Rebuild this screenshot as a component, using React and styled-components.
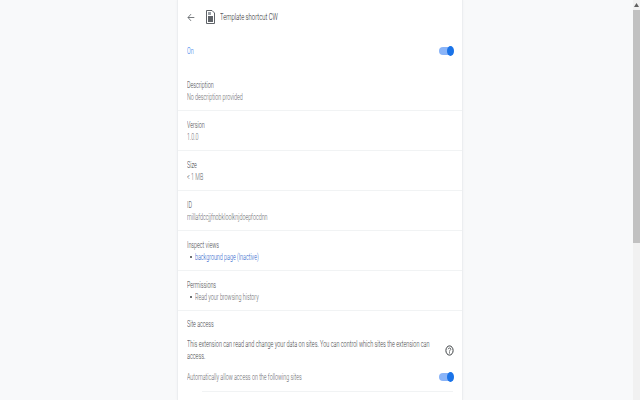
import React from "react";
import styled, { createGlobalStyle } from "styled-components";

const Global = createGlobalStyle`
  html, body { margin: 0; padding: 0; height: 400px; overflow: hidden; background: #f8f9fa; }
  #root { height: 400px; }
`;
const Page = styled.div`
  height: 400px; display: flex; font-family: Roboto, "Liberation Sans", sans-serif; background: #f8f9fa;
`;
const Main = styled.main`flex: 1; display: flex; justify-content: center; padding-left: 7px;`;
const Track = styled.div`
  width: 7px; background: #f1f1f1; display: flex; flex-direction: column;
`;
const TrackArrow = styled.div`height: 10px; display: flex; align-items: center; justify-content: center;`;
const Thumb = styled.div`height: 233px; background: #c1c1c1;`;
const Card = styled.div`
  width: 284px; height: 400px; background: #fff; overflow: hidden;
  box-shadow: 0 0 0 1px #eceef0, 0 0 3px #e6e8ea;
`;
const Header = styled.header`
  height: 34px; display: flex; align-items: center; padding-left: 9px; gap: 11px;
`;
const Text = styled.span`
  display: block; white-space: nowrap; font-size: 9px; line-height: 12px; font-weight: 300;
  transform: scaleX(.595); transform-origin: left center;
  color: ${p => p.$c || "#5f6368"};
`;
const Title = styled(Text)`
  font-size: 9.5px; transform: scaleX(.62); margin-left: -6px; color: #202124;
`;
const ParaLine = styled(Text)`transform: scaleX(.61); color: #3c4043;`;
const OnRow = styled.div`
  height: 37px; box-sizing: border-box; padding: 0 9px 3px 9px;
  display: flex; align-items: center; justify-content: space-between;
`;
const Block = styled.section`
  height: 40px; box-sizing: border-box; padding: 8px 9px 0;
  border-bottom: 1px solid #f1f3f4;
`;
const Bullet = styled.div`display: flex; align-items: center; padding-left: 3px; gap: 3px;`;
const Dot = styled.i`width: 2px; height: 2px; border-radius: 50%; background: #3c4043; flex: none;`;
const SiteBlock = styled.section`padding: 7px 9px 0;`;
const Para = styled.div`
  display: flex; align-items: center; margin-top: 8px; margin-right: -1px;
`;
const ParaText = styled.div`flex: 1; width: 0; min-width: 0;`;
const AutoRow = styled.div`
  height: 20px; margin-top: 5px; display: flex; align-items: center; justify-content: space-between;
`;
const Divider = styled.div`height: 1px; background: #f1f3f4; margin: 4px 0 0 15px;`;
const SwitchWrap = styled.div`position: relative; width: 14px; height: 8px; border-radius: 4px; background: #8ab4f8; flex: none;`;
const Knob = styled.i`position: absolute; right: -1px; top: -1px; width: 7px; height: 10px; border-radius: 50%; background: #1a73e8;`;
const Sw = () => <SwitchWrap><Knob /></SwitchWrap>;

export default function App() {
  return (
    <Page>
      <Global />
      <Main>
        <Card>
          <Header>
            <svg width="8" height="9" viewBox="0 0 24 24" preserveAspectRatio="none" fill="none" stroke="#5f6368" strokeWidth="2.4"><path d="M22 12H3M12 3l-9 9 9 9" /></svg>
            <svg width="9" height="14" viewBox="0 0 9 14"><path d="M.5.5H6L8.5 3V13.5H.5Z" fill="#fff" stroke="#5f6368" /><rect x="2" y="6" width="5" height="6" fill="#5f6368" /><rect x="2" y="2" width="3" height="3" fill="#9aa0a6" /></svg>
            <Title>Template shortcut CW</Title>
          </Header>
          <OnRow><Text $c="#1a73e8">On</Text><Sw /></OnRow>
          <Block><Text $c="#3c4043">Description</Text><Text>No description provided</Text></Block>
          <Block><Text $c="#3c4043">Version</Text><Text>1.0.0</Text></Block>
          <Block><Text $c="#3c4043">Size</Text><Text>&lt; 1 MB</Text></Block>
          <Block><Text $c="#3c4043">ID</Text><Text>millafdccjjfnobkloolknjdoepfocdnn</Text></Block>
          <Block><Text $c="#3c4043">Inspect views</Text><Bullet><Dot /><Text $c="#1a57c8">background page (Inactive)</Text></Bullet></Block>
          <Block><Text $c="#3c4043">Permissions</Text><Bullet><Dot /><Text>Read your browsing history</Text></Bullet></Block>
          <SiteBlock>
            <Text $c="#3c4043">Site access</Text>
            <Para>
              <ParaText>
                <ParaLine>This extension can read and change your data on sites. You can control which sites the extension can</ParaLine>
                <ParaLine>access.</ParaLine>
              </ParaText>
              <svg width="9" height="11" viewBox="0 0 9 11" fill="none"><ellipse cx="4.5" cy="5.5" rx="3.6" ry="4.6" stroke="#3c4043" /><path d="M3.2 4.2C3.4 2.6 5.8 2.6 5.8 4.2 5.8 5.2 4.5 5.2 4.5 6.6" stroke="#3c4043" strokeWidth=".8" /><rect x="4" y="7.4" width="1" height="1" fill="#3c4043" /></svg>
            </Para>
            <AutoRow><Text>Automatically allow access on the following sites</Text><Sw /></AutoRow>
            <Divider />
          </SiteBlock>
        </Card>
      </Main>
      <Track>
        <TrackArrow><svg width="5" height="4" viewBox="0 0 5 4"><path d="M2.5 0 5 4H0Z" fill="#606060" /></svg></TrackArrow>
        <Thumb />
      </Track>
    </Page>
  );
}
